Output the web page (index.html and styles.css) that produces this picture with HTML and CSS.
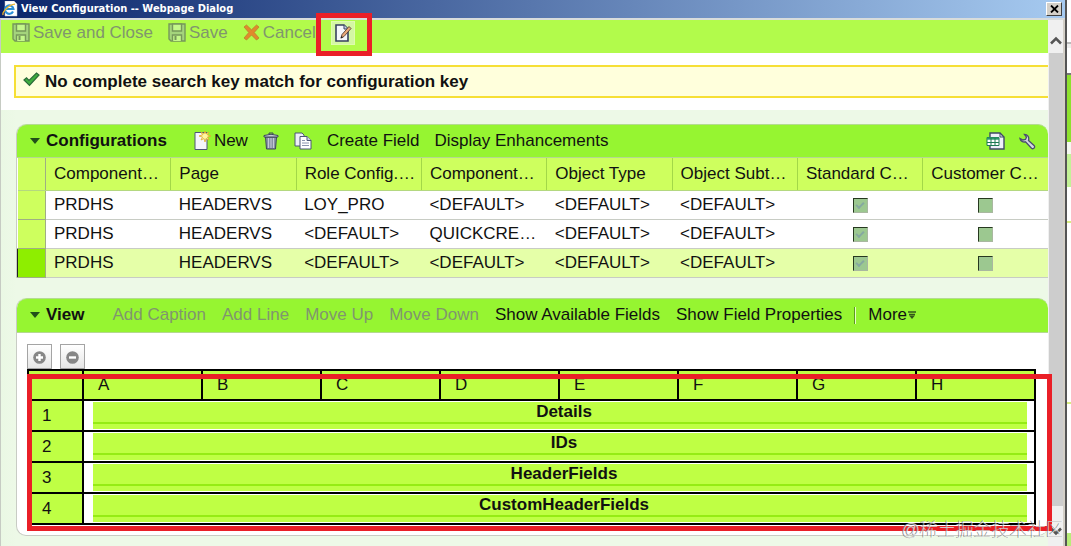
FILE: index.html
```html
<!DOCTYPE html>
<html lang="en">
<head>
    <meta charset="UTF-8">
    <meta name="viewport" content="width=device-width, initial-scale=1.0">
    <title>View Configuration -- Webpage Dialog</title>
    <link rel="stylesheet" href="styles.css">
</head>
<body>

    <div class="desktop">
        <div class="dialog" role="dialog" aria-labelledby="dialogTitle">
            <header class="titlebar">
                <svg class="titlebar__icon" width="16" height="16" viewBox="0 0 16 16" aria-hidden="true">
                    <path d="M3 0h9l3 3v12H3z" fill="#fff" stroke="#c9c9c9" stroke-width=".5"/>
                    <path d="M11 10.5A4.2 4.2 0 1 1 11.4 8H4" fill="none" stroke="#2b8fd8" stroke-width="2.2"/>
                    <path d="M1.2 14C-.5 11.500 7 3.500 13 3.200" fill="none" stroke="#f0b429" stroke-width="1.300"/>
                </svg>
                <h1 class="titlebar__text" id="dialogTitle">View Configuration -- Webpage Dialog</h1>
                <button class="titlebar__close" type="button" aria-label="Close">
                    <svg width="9" height="8" viewBox="0 0 9 8"><path d="M1 .5l7 7M8 .5l-7 7" stroke="#000" stroke-width="1.800"/></svg>
                </button>
            </header>

            <div class="dialog__body">
                <main class="content">
                    <div class="toolbar">
                        <button class="tool tool--disabled" type="button" disabled>
                            <svg width="18" height="19" viewBox="0 0 18 19" fill="none" stroke="#76985a" stroke-width="1.400"><path d="M1 1h16v17H3l-2-2z" fill="#a4d47c"/><path d="M4.500 1v7h9V1z" fill="#c4f88a"/><path d="M4.500 18v-6h9v6" fill="#c4f88a"/><path d="M7.500 13v4" stroke-width="2"/></svg>
                            Save and Close
                        </button>
                        <button class="tool tool--disabled" type="button" disabled>
                            <svg width="18" height="19" viewBox="0 0 18 19" fill="none" stroke="#76985a" stroke-width="1.400"><path d="M1 1h16v17H3l-2-2z" fill="#a4d47c"/><path d="M4.500 1v7h9V1z" fill="#c4f88a"/><path d="M4.500 18v-6h9v6" fill="#c4f88a"/><path d="M7.500 13v4" stroke-width="2"/></svg>
                            Save
                        </button>
                        <button class="tool tool--disabled" type="button" disabled>
                            <svg width="17" height="17" viewBox="0 0 17 17"><path d="M1 3l2.500-2 5 4.800L13.500 1 16 3l-4.800 5.500L16 14l-2.500 2-5-5-5 5L1 14l4.800-5.500z" fill="#e08a2c" stroke="#b9812f" stroke-width=".8"/></svg>
                            Cancel
                        </button>
                        <button class="tool tool--edit" type="button" aria-label="Configure page">
                            <svg width="18" height="20" viewBox="0 0 18 20"><path d="M2 2h8l4 4v12H2z" fill="#f4f6fc" stroke="#36405e" stroke-width="1.600"/><path d="M10 2v4h4" fill="#c9d2e8" stroke="#36405e"/><path d="M7 15l1-3.500 7-8 2 2-7 8z" fill="#e9a878" stroke="#533d35" stroke-width=".9"/><path d="M6.500 15.500l1-2.500 1.500 1.500z" fill="#222"/></svg>
                        </button>
                    </div>

                    <p class="message" role="status">
                        <svg width="17" height="20" viewBox="0 0 17 20" aria-hidden="true"><path d="M1 8l2.500-2.200L6 8.500 13.500 1l2.500 2L6.500 13.500z" fill="#3fae3f" stroke="#2c6b3a" stroke-width="1.200"/></svg>
                        No complete search key match for configuration key
                    </p>

                    <div class="panels">
                        <section class="panel">
                            <div class="panel__header">
                                <h2 class="panel__title"><span class="panel__arrow"></span>Configurations</h2>
                                <button class="tool" type="button">
                                    <svg width="17" height="20" viewBox="0 0 17 20"><path d="M1 1.500h12v17H1z" fill="#f5f6fb" stroke="#4c5677"/><path d="M11 0l1 3 3-2-1.500 3L17 5l-3.500 1L15 9l-3-1.500L11 11l-1-3.500L7 9l1.500-3L5 5l3.500-1L7 1l3 2z" fill="#fff6a0" stroke="#e0a828" stroke-width=".8"/></svg>
                                    New
                                </button>
                                <button class="tool" type="button" aria-label="Delete">
                                    <svg width="16" height="18" viewBox="0 0 16 18"><path d="M2.500 5h11l-1 12h-9z" fill="#8991a6" stroke="#3c435a"/><path d="M5.500 6v10M8 6v10M10.500 6v10" stroke="#c5cad6"/><path d="M1 3.500Q8 1 15 3.500V5H1z" fill="#c6ccd9" stroke="#3c435a"/><path d="M6 2V1h4v1" fill="none" stroke="#3c435a"/></svg>
                                </button>
                                <button class="tool" type="button" aria-label="Copy">
                                    <svg width="18" height="18" viewBox="0 0 18 18" stroke="#4c5677"><path d="M1 1h7l2 2v11H1z" fill="#eef0f8"/><path d="M6 4.500h7l4 4V17H6z" fill="#fff"/><path d="M13 4.500v4h4" fill="#cdd4e6"/><path d="M8 8.500h3M8 11h7M8 13.500h7" stroke="#8b94ae"/></svg>
                                </button>
                                <button class="tool" type="button">Create Field</button>
                                <button class="tool" type="button">Display Enhancements</button>
                                <div class="panel__actions">
                                    <button class="tool" type="button" aria-label="Export to spreadsheet">
                                        <svg width="19" height="18" viewBox="0 0 19 18"><path d="M4 1h10l4 4v12H4z" fill="#eef0f8" stroke="#3f4866" stroke-width="1.400"/><path d="M14 1v4h4" fill="none" stroke="#3f4866"/><path d="M1 5.500h12v8H1z" fill="#fff" stroke="#1e7a55"/><path d="M1 5.500h12v2.200H1z" fill="#2a9a6b"/><path d="M1 10.500h12M5 6v7M9 6v7" stroke="#1e7a55"/></svg>
                                    </button>
                                    <button class="tool" type="button" aria-label="Personalize">
                                        <svg width="17" height="17" viewBox="0 0 17 17"><path d="M1 5.500C1.500 8 4 9.500 6.500 8.800l6 6.500c1.500 1.200 4-.8 2.800-2.500L9.500 7.500C10.500 4 8.500 1.500 5.500 1.500L7.500 4 6.500 6.500 4 7z" fill="#d5d9e6" stroke="#4a4f6e" stroke-width="1.300"/></svg>
                                    </button>
                                </div>
                            </div>

                            <table class="configs">
                                <thead>
                                    <tr>
                                        <th class="configs__marker"></th>
                                        <th>Component…</th>
                                        <th>Page</th>
                                        <th>Role Config.…</th>
                                        <th>Component…</th>
                                        <th>Object Type</th>
                                        <th>Object Subt…</th>
                                        <th>Standard C…</th>
                                        <th>Customer C…</th>
                                    </tr>
                                </thead>
                                <tbody>
                                    <tr>
                                        <td class="configs__marker"></td>
                                        <td>PRDHS</td>
                                        <td>HEADERVS</td>
                                        <td>LOY_PRO</td>
                                        <td>&lt;DEFAULT&gt;</td>
                                        <td>&lt;DEFAULT&gt;</td>
                                        <td>&lt;DEFAULT&gt;</td>
                                        <td class="configs__check"><input class="check" type="checkbox" aria-label="Standard configuration" checked disabled></td>
                                        <td class="configs__check"><input class="check" type="checkbox" aria-label="Customer configuration" disabled></td>
                                    </tr>
                                    <tr>
                                        <td class="configs__marker"></td>
                                        <td>PRDHS</td>
                                        <td>HEADERVS</td>
                                        <td>&lt;DEFAULT&gt;</td>
                                        <td>QUICKCRE…</td>
                                        <td>&lt;DEFAULT&gt;</td>
                                        <td>&lt;DEFAULT&gt;</td>
                                        <td class="configs__check"><input class="check" type="checkbox" aria-label="Standard configuration" checked disabled></td>
                                        <td class="configs__check"><input class="check" type="checkbox" aria-label="Customer configuration" disabled></td>
                                    </tr>
                                    <tr class="configs__row--selected">
                                        <td class="configs__marker"></td>
                                        <td>PRDHS</td>
                                        <td>HEADERVS</td>
                                        <td>&lt;DEFAULT&gt;</td>
                                        <td>&lt;DEFAULT&gt;</td>
                                        <td>&lt;DEFAULT&gt;</td>
                                        <td>&lt;DEFAULT&gt;</td>
                                        <td class="configs__check"><input class="check" type="checkbox" aria-label="Standard configuration" checked disabled></td>
                                        <td class="configs__check"><input class="check" type="checkbox" aria-label="Customer configuration" disabled></td>
                                    </tr>
                                </tbody>
                            </table>
                        </section>

                        <section class="panel panel--view">
                            <div class="panel__header">
                                <h2 class="panel__title"><span class="panel__arrow"></span>View</h2>
                                <button class="tool tool--disabled" type="button" disabled>Add Caption</button>
                                <button class="tool tool--disabled" type="button" disabled>Add Line</button>
                                <button class="tool tool--disabled" type="button" disabled>Move Up</button>
                                <button class="tool tool--disabled" type="button" disabled>Move Down</button>
                                <button class="tool" type="button">Show Available Fields</button>
                                <button class="tool" type="button">Show Field Properties</button>
                                <span class="panel__separator"></span>
                                <button class="tool tool--more" type="button">
                                    More
                                    <svg width="8" height="8" viewBox="0 0 8 8"><path d="M0 1h8M1 3.500h6" stroke="#33551c" stroke-width="1.400"/><path d="M1 4.500h6L4 8z" fill="#33551c"/></svg>
                                </button>
                            </div>

                            <div class="panel__body">
                                <div class="zoom-buttons">
                                    <button class="zoom-button" type="button" aria-label="Add row">
                                        <svg width="13" height="13" viewBox="0 0 13 13"><circle cx="6.500" cy="6.500" r="6.300" fill="#868686"/><path d="M6.500 3v7M3 6.500h7" stroke="#fff" stroke-width="2.400"/></svg>
                                    </button>
                                    <button class="zoom-button" type="button" aria-label="Remove row">
                                        <svg width="13" height="13" viewBox="0 0 13 13"><circle cx="6.500" cy="6.500" r="6.300" fill="#868686"/><path d="M3 6.500h7" stroke="#fff" stroke-width="2.400"/></svg>
                                    </button>
                                </div>

                                <table class="grid">
                                    <thead>
                                        <tr>
                                            <th class="grid__index"></th>
                                            <th>A</th>
                                            <th>B</th>
                                            <th>C</th>
                                            <th>D</th>
                                            <th>E</th>
                                            <th>F</th>
                                            <th>G</th>
                                            <th>H</th>
                                        </tr>
                                    </thead>
                                    <tbody>
                                        <tr>
                                            <th class="grid__index">1</th>
                                            <td colspan="8"><div class="grid__caption">Details</div></td>
                                        </tr>
                                        <tr>
                                            <th class="grid__index">2</th>
                                            <td colspan="8"><div class="grid__caption">IDs</div></td>
                                        </tr>
                                        <tr>
                                            <th class="grid__index">3</th>
                                            <td colspan="8"><div class="grid__caption">HeaderFields</div></td>
                                        </tr>
                                        <tr>
                                            <th class="grid__index">4</th>
                                            <td colspan="8"><div class="grid__caption">CustomHeaderFields</div></td>
                                        </tr>
                                    </tbody>
                                </table>
                            </div>
                        </section>
                    </div>
                </main>

                <div class="scrollbar" aria-hidden="true">
                    <svg class="scrollbar__arrow" width="12" height="9" viewBox="0 0 12 9"><path d="M1 7.500l5-5 5 5" fill="none" stroke="#555" stroke-width="2.500"/></svg>
                    <div class="scrollbar__thumb"></div>
                    <svg class="scrollbar__arrow" width="12" height="9" viewBox="0 0 12 9"><path d="M1 1.500l5 5 5-5" fill="none" stroke="#555" stroke-width="2.500"/></svg>
                </div>
            </div>
        </div>

        <div class="backdrop"></div>

        <div class="highlight highlight--edit"></div>
        <div class="highlight highlight--grid"></div>
        <span class="watermark">@稀土掘金技术社区</span>
    </div>

</body>
</html>
```
FILE: styles.css
```css
:root {
    --color-toolbar: #b2fb4b;
    --color-header: #96f531;
    --color-column: #ceff5e;
    --color-grid: #bfff44;
    --color-page: #edf9e7;
    --color-line: #c8ccc4;
    --color-disabled: #80966e;
    --color-highlight: #ea1f27;

    --font-ui: "Liberation Sans", Arial, sans-serif;
    --font-size: 17px;
}

*,
*::before,
*::after {
    box-sizing: border-box;
}

body {
    margin: 0;
    font-family: var(--font-ui);
    font-size: var(--font-size);
    line-height: 20px;
    color: #111;
}

h1, h2, p { margin: 0; }

button {
    padding: 0;
    border: none;
    background: none;
    font: inherit;
    color: inherit;
    cursor: pointer;
}

svg { flex: none; }

/* Desktop with the dialog and a strip of the page behind it */
.desktop {
    position: relative;
    display: flex;
    min-height: 100vh;
    overflow: hidden;
}

.backdrop {
    width: 4px;
    background: linear-gradient(#fff 42px, #bbb 42px 44px, #eee 44px 48px, #fff 48px 73px, #777 73px 75px, #8ee22e 75px 142px, #f4f8f0 142px 154px, #c3f296 154px 187px, #fff 187px 221px, #d8ee80 221px 223px, #fff 223px 402px, #d8ee80 402px 404px, #fff 404px 533px, #b8ee78 533px);
}

.dialog {
    flex: 1;
    min-width: 0;
    display: flex;
    flex-direction: column;
    border-right: 2px solid #555;
}

/* Title bar */
.titlebar {
    display: flex;
    align-items: center;
    gap: 3px;
    height: 18px;
    padding: 0 3px 0 2px;
    background: linear-gradient(90deg, #0a246a, #a6caf0);
    color: #fff;
}

.titlebar__text {
    flex: 1;
    font: bold 11px/18px "DejaVu Sans Condensed", "DejaVu Sans", sans-serif;
}

.titlebar__close {
    display: flex;
    align-items: center;
    justify-content: center;
    width: 16px;
    height: 14px;
    background: #d4d0c8;
    border: 1px solid;
    border-color: #fff #404040 #404040 #fff;
}

.dialog__body {
    flex: 1;
    display: flex;
    border-top: 2px solid #d8dcdc;
    border-left: 1px solid #c6cbc3;
    border-right: 2px solid #d4d0c8;
}

.content {
    flex: 1;
    min-width: 0;
    display: flex;
    flex-direction: column;
}

/* Scrollbar */
.scrollbar {
    display: flex;
    flex-direction: column;
    align-items: center;
    width: 15px;
    background: #f0f0f0;
}

.scrollbar__arrow { margin: 16px 0 8px; }

.scrollbar__thumb {
    flex: 1;
    width: 14px;
    background: #cdcdcd;
}

.scrollbar__thumb + .scrollbar__arrow { margin: 21px 0 10px; }

/* Toolbars */
.toolbar {
    display: flex;
    align-items: center;
    gap: 15px;
    height: 33px;
    padding: 0 11px 8px;
    background: var(--color-toolbar);
}

.tool {
    display: flex;
    align-items: center;
    gap: 3px;
    white-space: nowrap;
}

.tool--disabled { color: var(--color-disabled); }

.tool--edit {
    justify-content: center;
    width: 24px;
    height: 24px;
    background: #d4f7a4;
    border: 1px solid #dffcae;
}

/* Message */
.message {
    display: flex;
    align-items: center;
    gap: 5px;
    margin: 12px 0 12px 13px;
    padding: 4px 7px;
    height: 33px;
    border: 2px solid #f6df35;
    border-right: none;
    background: #ffffdc;
    font-weight: bold;
}

/* Panels */
.panels {
    flex: 1;
    padding: 14px 0 10px 15px;
    background: linear-gradient(90deg, #eaf8e4, var(--color-page) 15px);
}

.panel { border-left: 1px solid var(--color-line); border-radius: 10px 10px 0 0; }

.panel--view {
    margin-top: 20px;
    border-bottom: 1px solid var(--color-line);
    border-radius: 10px;
    background: #fff;
}

.panel__header {
    display: flex;
    align-items: center;
    gap: 15px;
    height: 34px;
    padding: 0 12px 0 13px;
    border-top: 1px solid #b4dc90;
    border-bottom: 1px solid #b4d890;
    border-radius: 10px 10px 0 0;
    background: var(--color-header);
}

.panel--view .panel__header {
    gap: 16px;
    height: 35px;
}

.panel__title {
    display: flex;
    align-items: center;
    gap: 6px;
    margin-right: 12px;
    font-size: var(--font-size);
}

.panel__arrow {
    border: 5px solid transparent;
    border-top: 6px solid #22501a;
    border-bottom: none;
}

.panel__actions {
    display: flex;
    gap: 14px;
    margin-left: auto;
}

.panel__separator {
    width: 2px;
    height: 17px;
    margin: 0 -4px;
    background: linear-gradient(90deg, #5a9a20 1px, #e8ffc8 1px);
}

.tool--more { gap: 1px; }

.panel__body { padding: 11px 12px 10px 10px; }

/* Configurations table */
.configs {
    width: 100%;
    table-layout: fixed;
    border-collapse: collapse;
    background: #fff;
}

.configs th,
.configs td {
    height: 29px;
    padding: 0 0 0 8px;
    border-bottom: 1px solid var(--color-line);
    text-align: left;
    font-weight: normal;
    white-space: nowrap;
}

.configs th {
    height: 32px;
    border-right: 1px solid #a3d848;
    border-bottom-color: #b4d880;
    background: var(--color-column);
}

.configs th:last-child { border-right: none; }

.configs .configs__marker {
    width: 28px;
    padding: 0;
    border-right: 1px solid #9fae84;
    background: var(--color-column);
}

.configs td.configs__marker { border-bottom-color: #9fae84; }

.configs td.configs__check { padding: 0; text-align: center; }

.configs__row--selected { background: #e5ffa8; }

.configs .configs__row--selected .configs__marker {
    border-left: 1px solid #222;
    border-top: 1px solid #222;
    background: #8eee00;
}

.check {
    display: inline-block;
    appearance: none;
    width: 15px;
    height: 15px;
    margin: 0;
    vertical-align: middle;
    border: 1px solid;
    border-color: #26381f #a9b8a0 #a9b8a0 #26381f;
    background: #9cc890;
}

.check:checked::before {
    content: "";
    display: block;
    width: 8px;
    height: 5px;
    margin: 3px 2px;
    border: solid #86a9a0;
    border-width: 0 0 2px 2px;
    transform: rotate(-45deg);
}

/* View grid */
.zoom-buttons { display: flex; gap: 8px; }

.zoom-button {
    display: flex;
    align-items: center;
    justify-content: center;
    width: 25px;
    height: 25px;
    padding-top: 3px;
    border: 1px solid #a4a4a4;
    background: linear-gradient(#fff, #e6e6e6);
}

.grid {
    width: 100%;
    table-layout: fixed;
    border-collapse: collapse;
}

.grid th,
.grid td {
    height: 31px;
    padding: 0 0 0 14px;
    border: 2px solid #000;
    text-align: left;
    font-weight: normal;
}

.grid th { background: var(--color-grid); }

.grid thead th { height: 30px; }

.grid .grid__index { width: 55px; }

.grid tbody .grid__index { padding: 2px 0 0 13px; }

.grid td { padding: 0 7px 0 9px; }

.grid__caption {
    height: 27px;
    padding-left: 8px;
    background: linear-gradient(transparent 20px, #95ec14 20px 22px, transparent 22px) var(--color-grid);
    text-align: center;
    font-weight: bold;
}

/* Marked areas lying over the dialog */
.highlight {
    position: absolute;
    border: 5px solid var(--color-highlight);
    pointer-events: none;
}

.highlight--edit {
    top: 13px;
    left: 316px;
    width: 56px;
    height: 43px;
}

.highlight--grid {
    top: 374px;
    right: 19px;
    left: 27px;
    height: 157px;
}

.watermark {
    position: absolute;
    right: 7px;
    bottom: 5px;
    font: 300 18px/22px "Liberation Sans", "Noto Sans CJK SC", sans-serif;
    color: rgba(255, 255, 255, 0.7);
    text-shadow: -1px 0 0 rgba(90, 90, 90, 0.7);
}
```
